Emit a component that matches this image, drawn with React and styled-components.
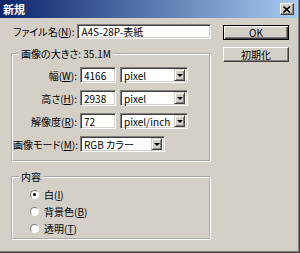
import React from 'react';
import styled, { createGlobalStyle, css } from 'styled-components';

const Global = createGlobalStyle`
  html, body { margin: 0; padding: 0; background: #d4d0c8; }
  body {
    font-family: "Noto Sans CJK JP", "Liberation Sans", sans-serif;
    font-size: 10px;
    font-feature-settings: "palt";
    color: #000;
  }
`;

const sunken = css`
  box-sizing: border-box;
  border: 1px solid;
  border-color: #808080 #fff #fff #808080;
  box-shadow: inset 1px 1px #404040, inset -1px -1px #d4d0c8;
`;

const Window = styled.div`
  box-sizing: border-box;
  width: 300px;
  height: 253px;
  background: #d4d0c8;
  padding: 0 3px 3px 0;
  box-shadow: inset -1px -1px #404040, inset -2px -2px #808080;
  display: flex;
  flex-direction: column;
`;

const TitleBar = styled.div`
  height: 18px;
  flex: none;
  display: flex;
  align-items: center;
  justify-content: space-between;
  padding: 0 3px 0 3px;
  background: linear-gradient(to right, #0a246a, #a6caf0);
  color: #fff;
  font-weight: bold;
  font-size: 11px;
`;

const CloseButton = styled.div`
  box-sizing: border-box;
  width: 14px;
  height: 12px;
  background: #d4d0c8;
  border: 1px solid;
  border-color: #fff #404040 #404040 #fff;
  box-shadow: inset -1px -1px #808080;
  display: flex;
  align-items: center;
  justify-content: center;
`;

const Body = styled.div`
  display: flex;
  padding: 6px 0 0 11px;
`;

const LeftCol = styled.div`
  width: 200px;
  display: flex;
  flex-direction: column;
`;

const RightCol = styled.div`
  width: 66px;
  margin-left: 12px;
  display: flex;
  flex-direction: column;
  gap: 7px;
  padding-top: 1px;
`;

const FileRow = styled.div`
  display: flex;
  align-items: center;
  height: 15px;
  padding-left: 2px;
`;

const Label = styled.label`
  white-space: nowrap;
  width: ${p => (p.$w ? `${p.$w}px` : 'auto')};
  text-align: ${p => (p.$right ? 'right' : 'left')};
  margin-right: 3px;
  flex: none;
`;

const TextField = styled.div`
  ${sunken};
  background: #fff;
  height: ${p => p.$h || 16}px;
  width: ${p => (p.$w ? `${p.$w}px` : 'auto')};
  flex: ${p => (p.$w ? 'none' : '1')};
  display: flex;
  align-items: center;
  padding-left: 3px;
  white-space: nowrap;
`;

const Select = styled.div`
  ${sunken};
  background: #fff;
  height: 16px;
  width: ${p => p.$w}px;
  margin-left: ${p => p.$ml || 0}px;
  flex: none;
  display: flex;
  align-items: center;
  padding: 2px 2px 2px 3px;
  white-space: nowrap;
`;

const SelectText = styled.span`
  flex: 1;
`;

const DropButton = styled.div`
  box-sizing: border-box;
  width: 11px;
  height: 12px;
  background: #d4d0c8;
  border: 1px solid;
  border-color: #d4d0c8 #404040 #404040 #d4d0c8;
  box-shadow: inset 1px 1px #fff, inset -1px -1px #808080;
  display: flex;
  align-items: center;
  justify-content: center;
`;

const Arrow = styled.div`
  width: 0;
  height: 0;
  border-left: 3px solid transparent;
  border-right: 3px solid transparent;
  border-top: 3px solid #000;
`;

const Group = styled.fieldset`
  margin: ${p => p.$mt}px 0 0 0;
  padding: 0;
  border: 2px groove #fff;
  min-width: 0;
  height: ${p => p.$h}px;
  box-sizing: border-box;
`;

const Legend = styled.legend`
  margin-left: 6px;
  padding: 0 2px;
  line-height: 12px;
`;

const GroupContent = styled.div`
  display: flex;
  flex-direction: column;
  gap: ${p => p.$gap}px;
  padding: ${p => p.$pt}px 0 0 ${p => p.$pl || 0}px;
`;

const FieldRow = styled.div`
  display: flex;
  align-items: center;
`;

const Button = styled.div`
  box-sizing: border-box;
  height: 15px;
  background: #d4d0c8;
  border: 1px solid;
  border-color: #fff #404040 #404040 #fff;
  box-shadow: inset -1px -1px #808080;
  display: flex;
  align-items: center;
  justify-content: center;
  ${p => p.$default && css`
    border-color: #000;
    box-shadow: inset 1px 1px #fff, inset -1px -1px #404040, inset -2px -2px #808080;
  `}
`;

const RadioRow = styled.div`
  display: flex;
  align-items: center;
  height: 13px;
`;

const RadioCircle = styled.span`
  box-sizing: border-box;
  width: 9px;
  height: 9px;
  border-radius: 50%;
  border: 1px solid;
  border-color: #808080 #fff #fff #808080;
  background: #fff;
  margin-right: 5px;
  display: flex;
  align-items: center;
  justify-content: center;
  &::after {
    content: '';
    width: 3px;
    height: 3px;
    border-radius: 50%;
    background: ${p => (p.$checked ? '#000' : 'transparent')};
  }
`;

const Radio = ({ checked, children }) => (
  <RadioRow>
    <RadioCircle $checked={checked} />
    <span>{children}</span>
  </RadioRow>
);

const SelectBox = ({ w, ml, value }) => (
  <Select $w={w} $ml={ml}>
    <SelectText>{value}</SelectText>
    <DropButton><Arrow /></DropButton>
  </Select>
);

export default function App() {
  return (
    <Window>
      <Global />
      <TitleBar>
        <span>新規</span>
        <CloseButton>
          <svg width="8" height="7" viewBox="0 0 8 7">
            <path d="M0.5 0.5 L7 6.5 M7 0.5 L0.5 6.5" stroke="#000" strokeWidth="1.6" />
          </svg>
        </CloseButton>
      </TitleBar>
      <Body>
        <LeftCol>
          <FileRow>
            <Label>ファイル名(<u>N</u>):</Label>
            <TextField $h={15}>A4S-28P-表紙</TextField>
          </FileRow>
          <Group $mt={9} $h={114}>
            <Legend>画像の大きさ: 35.1M</Legend>
            <GroupContent $gap={7} $pt={7}>
              <FieldRow>
                <Label $w={64} $right>幅(<u>W</u>):</Label>
                <TextField $w={36}>4166</TextField>
                <SelectBox w={68} ml={4} value="pixel" />
              </FieldRow>
              <FieldRow>
                <Label $w={64} $right>高さ(<u>H</u>):</Label>
                <TextField $w={36}>2938</TextField>
                <SelectBox w={68} ml={4} value="pixel" />
              </FieldRow>
              <FieldRow>
                <Label $w={64} $right>解像度(<u>R</u>):</Label>
                <TextField $w={36}>72</TextField>
                <SelectBox w={68} ml={4} value="pixel/inch" />
              </FieldRow>
              <FieldRow>
                <Label $w={64} $right>画像モード(<u>M</u>):</Label>
                <SelectBox w={85} value="RGB カラー" />
              </FieldRow>
            </GroupContent>
          </Group>
          <Group $mt={9} $h={69}>
            <Legend>内容</Legend>
            <GroupContent $gap={4} $pt={5} $pl={17}>
              <Radio checked>白(<u>I</u>)</Radio>
              <Radio>背景色(<u>B</u>)</Radio>
              <Radio>透明(<u>T</u>)</Radio>
            </GroupContent>
          </Group>
        </LeftCol>
        <RightCol>
          <Button $default>OK</Button>
          <Button>初期化</Button>
        </RightCol>
      </Body>
    </Window>
  );
}
